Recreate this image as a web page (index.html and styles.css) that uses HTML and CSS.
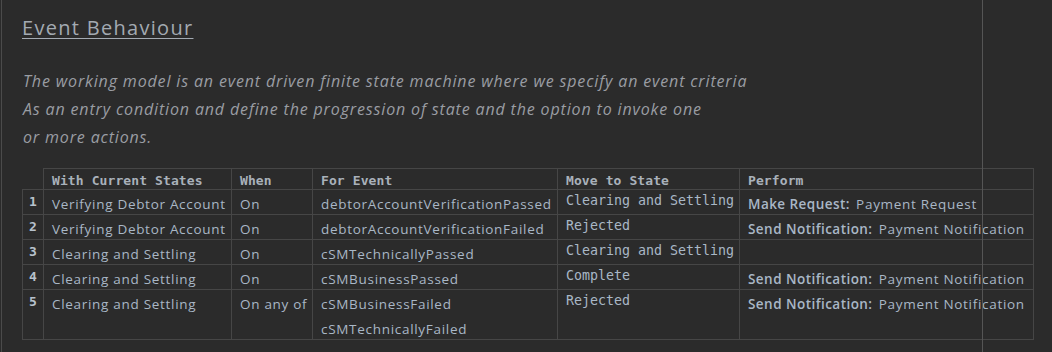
FILE: index.html
```html
<!DOCTYPE html>
<html lang="en">
<head>
    <meta charset="UTF-8">
    <title>Event Behaviour</title>
    <link rel="stylesheet" href="styles.css">
</head>
<body>
    <div class="page">
        <h2 class="title">Event Behaviour</h2>

        <p class="intro">
            The working model is an event driven finite state machine where we specify an event criteria<br>
            As an entry condition and define the progression of state and the option to invoke one<br>
            or more actions.
        </p>

        <table class="events">
            <colgroup>
                <col class="c-num">
                <col class="c-state">
                <col class="c-when">
                <col class="c-event">
                <col class="c-move">
                <col class="c-perform">
            </colgroup>
            <thead>
                <tr>
                    <th class="corner"></th>
                    <th>With Current States</th>
                    <th>When</th>
                    <th>For Event</th>
                    <th>Move to State</th>
                    <th>Perform</th>
                </tr>
            </thead>
            <tbody>
                <tr>
                    <td class="num">1</td>
                    <td>Verifying Debtor Account</td>
                    <td>On</td>
                    <td><div class="ev">debtorAccountVerificationPassed</div></td>
                    <td class="mono">Clearing and Settling</td>
                    <td><b>Make Request:</b> Payment Request</td>
                </tr>
                <tr>
                    <td class="num">2</td>
                    <td>Verifying Debtor Account</td>
                    <td>On</td>
                    <td><div class="ev">debtorAccountVerificationFailed</div></td>
                    <td class="mono">Rejected</td>
                    <td><b>Send Notification:</b> Payment Notification</td>
                </tr>
                <tr>
                    <td class="num">3</td>
                    <td>Clearing and Settling</td>
                    <td>On</td>
                    <td><div class="ev">cSMTechnicallyPassed</div></td>
                    <td class="mono">Clearing and Settling</td>
                    <td></td>
                </tr>
                <tr>
                    <td class="num">4</td>
                    <td>Clearing and Settling</td>
                    <td>On</td>
                    <td><div class="ev">cSMBusinessPassed</div></td>
                    <td class="mono">Complete</td>
                    <td><b>Send Notification:</b> Payment Notification</td>
                </tr>
                <tr>
                    <td class="num">5</td>
                    <td>Clearing and Settling</td>
                    <td>On any of</td>
                    <td>
                        <div class="ev">cSMBusinessFailed</div>
                        <div class="ev">cSMTechnicallyFailed</div>
                    </td>
                    <td class="mono">Rejected</td>
                    <td><b>Send Notification:</b> Payment Notification</td>
                </tr>
            </tbody>
        </table>
    </div>

    <!-- right margin guide -->
    <div class="guide"></div>
</body>
</html>
```

FILE: styles.css
```css
* {
    box-sizing: border-box;
}

body {
    margin: 0;
    background-color: #2b2b2b;
    font-family: 'Open Sans', sans-serif;
    color: #a9b7c6;
}

/* Editor preview pane */
.page {
    margin-left: 1px;
    border-left: 1px solid #4b4b4b;
    min-height: 352px;
    padding: 14px 0 0 20px;
}

.title {
    margin: 0;
    font-size: 20px;
    font-weight: 400;
    line-height: 28px;
    letter-spacing: 1.3px;
    color: #a3aab2;
    text-decoration: underline;
    text-underline-offset: 3px;
    text-decoration-thickness: 1px;
}

.intro {
    margin: 25px 0 17px 1px;
    font-size: 16px;
    font-style: italic;
    line-height: 28px;
    letter-spacing: 0.85px;
    color: #9a9da3;
}

/* Table */
.events {
    border-collapse: collapse;
    table-layout: fixed;
    width: 1011px;
    font-size: 13.5px;
    letter-spacing: 0.7px;
    white-space: nowrap;
}

.c-num { width: 21px; }
.c-state { width: 188px; }
.c-when { width: 81px; }
.c-event { width: 245px; }
.c-move { width: 182px; }
.c-perform { width: 294px; }

.events th,
.events td {
    border: 1px solid #464646;
    text-align: left;
    vertical-align: top;
    overflow: hidden;
}

.events th {
    font-family: 'DejaVu Sans Mono', monospace;
    font-weight: bold;
    font-size: 13px;
    letter-spacing: 0.1px;
    line-height: 17px;
    padding: 3px 8px 0;
    color: #a9b1ba;
}

.events th.corner {
    border: none;
}

.events td {
    padding: 4px 8px 0;
    line-height: 20px;
}

.events td .ev + .ev {
    margin-top: 5px;
}

.events td.num {
    font-family: 'DejaVu Sans Mono', monospace;
    font-weight: bold;
    font-size: 13px;
    letter-spacing: 0;
    text-align: center;
    padding: 3px 0 0;
    line-height: 18px;
    color: #b7c1cc;
}

.events td.mono {
    font-family: 'DejaVu Sans Mono', monospace;
    font-size: 13.3px;
    letter-spacing: 0;
    padding-top: 2px;
    line-height: 18px;
}

.events b {
    font-weight: 600;
    letter-spacing: 0.45px;
    margin-right: 2px;
}

.guide {
    position: absolute;
    top: 0;
    left: 982px;
    width: 1px;
    height: 352px;
    background-color: #555555;
}
```
